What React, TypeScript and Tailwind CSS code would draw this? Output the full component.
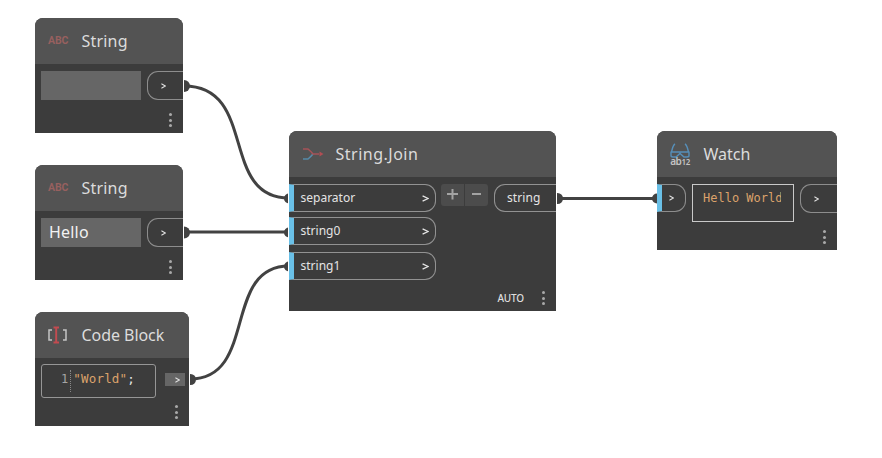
import type { ReactNode } from "react";

type NodeProps = {
  place: string;
  title: string;
  titleClass?: string;
  icon: ReactNode;
  children: ReactNode;
};

function GraphNode({ place, title, titleClass = "", icon, children }: NodeProps) {
  return (
    <section className={`absolute flex flex-col overflow-hidden rounded-t-lg bg-[#3c3c3c] ${place}`}>
      <header className="flex h-[46px] shrink-0 items-center bg-[#535353]">
        <div className="flex w-[46.5px] shrink-0 items-center pl-3">{icon}</div>
        <h2 className={`whitespace-nowrap text-[16px] leading-6 text-[#dcdcdc] ${titleClass}`}>{title}</h2>
      </header>
      {children}
    </section>
  );
}

function Menu() {
  return (
    <div className="flex w-[3px] flex-col gap-[2.5px]">
      <i className="h-[3px] w-[3px] rounded-full bg-[#a9a9a9]" />
      <i className="h-[3px] w-[3px] rounded-full bg-[#a9a9a9]" />
      <i className="h-[3px] w-[3px] rounded-full bg-[#a9a9a9]" />
    </div>
  );
}

function Chevron({ big = false }: { big?: boolean }) {
  return (
    <svg width={big ? 7 : 5} height={big ? 7 : 6} viewBox="0 0 6 6" preserveAspectRatio="none" fill="none" stroke="#e4e4e4" strokeWidth={big ? 1.1 : 1.2}>
      <path d="M.5 .7 5.2 3 .5 5.3" />
    </svg>
  );
}

function OutPort({ className }: { className: string }) {
  return (
    <div className={`flex h-[29px] items-center rounded-l-[11px] border border-r-0 border-[#8d8d8d] pl-[13px] ${className}`}>
      <Chevron />
    </div>
  );
}

function AbcIcon() {
  return <span className="pl-px text-[10.5px] leading-none font-bold tracking-[-0.1px] text-[#97605f] font-['Roboto',sans-serif]">ABC</span>;
}

function StringNode({ place, value }: { place: string; value: string }) {
  return (
    <GraphNode place={place} title="String" titleClass="tracking-[0.2px]" icon={<AbcIcon />}>
      <div className="mt-[7px] flex justify-between pl-1.5">
        <div className="flex h-[29px] w-[99.5px] items-center bg-[#666666] pb-0.5 pl-2 text-[16px] tracking-[0.2px] text-[#f2f2f2]">{value}</div>
        <OutPort className="w-9" />
      </div>
      <div className="mt-auto flex justify-end pr-[11px] pb-[6px]"><Menu /></div>
    </GraphNode>
  );
}

function InPort({ label }: { label: string }) {
  return (
    <div className="flex h-[28px] w-[147px] items-center justify-between rounded-r-[11px] border border-l-[5px] border-[#929292] border-l-[#6ac0e7] pr-1.5 pl-[6.5px] text-[12px] text-[#e4e4e4]">
      <span className="-mt-px">{label}</span>
      <Chevron big />
    </div>
  );
}

function Wires() {
  return (
    <svg className="absolute inset-0" width="882" height="458" fill="none" stroke="#424242" strokeWidth="3">
      <path d="M184 86C258 86 219 198 289 198" />
      <path d="M184 232H289" />
      <path d="M190 379C258 379 222 266 289 266" />
      <path d="M556 198.500H657" />
      <g fill="#424242" stroke="none">
        <circle cx="184" cy="86" r="6" />
        <circle cx="184" cy="232.500" r="6" />
        <circle cx="190.500" cy="379.500" r="5.500" />
        <circle cx="289" cy="198.500" r="5" />
        <circle cx="289" cy="232.500" r="5" />
        <circle cx="289" cy="266.500" r="5" />
        <circle cx="557.500" cy="198.500" r="5.500" />
        <circle cx="657" cy="198.500" r="5" />
      </g>
      <path stroke="white" strokeWidth="1" d="M183.500 80V92M183.500 226V239M189.500 373V386M556.500 192V205M288.500 192V205M288.500 226V239M288.500 260V273" />
    </svg>
  );
}

export default function App() {
  return (
    <main className="relative h-[458px] w-[882px] overflow-hidden bg-white font-['Noto_Sans',sans-serif]">
      <Wires />
      <StringNode place="left-[35px] top-[18px] h-[115px] w-[148px]" value="" />
      <StringNode place="left-[35px] top-[165px] h-[115px] w-[148px]" value="Hello" />

      <GraphNode
        place="left-[35px] top-[312px] h-[114px] w-[154px]"
        title="Code Block"
        titleClass="tracking-[-0.05px]"
        icon={
          <svg width="22" height="18" viewBox="0 0 22 18" fill="none">
            <path d="M5 4H2V14H5M16 4H19V14H16" stroke="#c5c5c5" strokeWidth="1.500" />
            <path d="M6.500 1.500H12M9.200 1.500V16.500M6.500 16.500H12" stroke="#c34b50" strokeWidth="1.900" />
          </svg>
        }
      >
        <div className="mt-1.5 flex items-center justify-between pr-1 pl-1.5">
          <div className="flex h-[34px] w-[115px] items-center rounded-[3px] border border-[#969696] pl-[19px] text-[12.5px] leading-4 font-['DejaVu_Sans_Mono',monospace]">
            <span className="-mt-1 text-[12px] text-[#a5a5a5]">1</span>
            <span className="-mt-px mr-[2px] ml-[2px] h-[22px] border-l border-dotted border-[#888888]" />
            <span className="-mt-1 tracking-[0.2px] text-[#dba26b]">"World"<b className="font-normal text-[#e4e4e4]">;</b></span>
          </div>
          <div className="-mt-[3px] flex h-[13px] w-5 items-center justify-end bg-[#666666] pr-[5px]"><Chevron /></div>
        </div>
        <div className="mt-auto flex justify-end pr-[11px] pb-[7px]"><Menu /></div>
      </GraphNode>

      <GraphNode
        place="left-[289px] top-[131px] h-[180px] w-[267px]"
        title="String.Join"
        titleClass="tracking-[0.5px]"
        icon={
          <svg width="24" height="16" viewBox="0 0 24 16" fill="none" strokeWidth="1.600">
            <path d="M2 13H7Q9.500 11 12 8" stroke="#568aa9" />
            <path d="M2 3H7Q9.500 5 12 8H18" stroke="#a65358" />
            <path d="M18.500 5.500 22.500 8 18.500 10.500Z" fill="#b14e54" />
          </svg>
        }
      >
        <div className="mt-[7px] flex">
          <div className="flex flex-col">
            <InPort label="separator" />
            <div className="mt-[5px]"><InPort label="string0" /></div>
            <div className="mt-[7px]"><InPort label="string1" /></div>
          </div>
          <div className="ml-[5px] flex h-[22px] gap-px overflow-hidden rounded-[3px]">
            <button className="flex w-[23px] items-center justify-center bg-[#4c4c4c]">
              <svg width="11" height="13" fill="none" stroke="#a3a3a3" strokeWidth="2"><path d="M0 5H11M5.500 0V10.500" /></svg>
            </button>
            <button className="flex w-[23px] items-center justify-center bg-[#4c4c4c]">
              <svg width="9" height="13" fill="none" stroke="#a3a3a3" strokeWidth="2"><path d="M0 5H9" /></svg>
            </button>
          </div>
          <div className="ml-auto flex h-[28px] w-[62px] items-center rounded-l-[11px] border border-r-0 border-[#929292] pl-3 text-[12px] tracking-[0.1px] text-[#e4e4e4]">string</div>
        </div>
        <div className="mt-auto flex items-center justify-end gap-[18px] pr-[11px] pb-[5px]">
          <span className="text-[10px] leading-4 font-medium tracking-[-0.15px] text-[#dedede]">AUTO</span>
          <Menu />
        </div>
      </GraphNode>

      <GraphNode
        place="left-[657px] top-[131px] h-[119px] w-[180px]"
        title="Watch"
        titleClass="tracking-[0px]"
        icon={
          <div className="flex flex-col items-center">
            <svg width="22" height="16" viewBox="0 0 22 16" fill="none" stroke="#568fb9" strokeWidth="1.400">
              <path d="M6 1Q4 2 2.500 9M16 1Q18 2 19.500 9M1.500 9H20.500M2 9V12.500Q2 14 4 14H7L11 10.500L15 14H18Q20 14 20 12.500V9" />
            </svg>
            <span className="-mt-[2px] text-[10px] leading-[9px] font-semibold tracking-[-0.4px] text-[#c4c4c4]">ab<span className="text-[8px]">12</span></span>
          </div>
        }
      >
        <div className="mt-[7px] flex items-start">
          <div className="flex h-[28px] w-[29px] items-center rounded-r-[11px] border border-l-[5px] border-[#8d8d8d] border-l-[#6ac0e7] pl-[7px]"><Chevron /></div>
          <div className="ml-1.5 h-[38px] w-[102px] border border-[#c9c9c9] pt-[5px] pl-[10px] text-[12px] leading-4 whitespace-nowrap text-[#dba26b] font-['DejaVu_Sans_Mono',monospace]">
            <div className="w-[78px] overflow-hidden">Hello World</div>
          </div>
          <OutPort className="ml-auto w-[37px]" />
        </div>
        <div className="mt-auto flex justify-end pr-[11px] pb-[6px]"><Menu /></div>
      </GraphNode>
    </main>
  );
}
